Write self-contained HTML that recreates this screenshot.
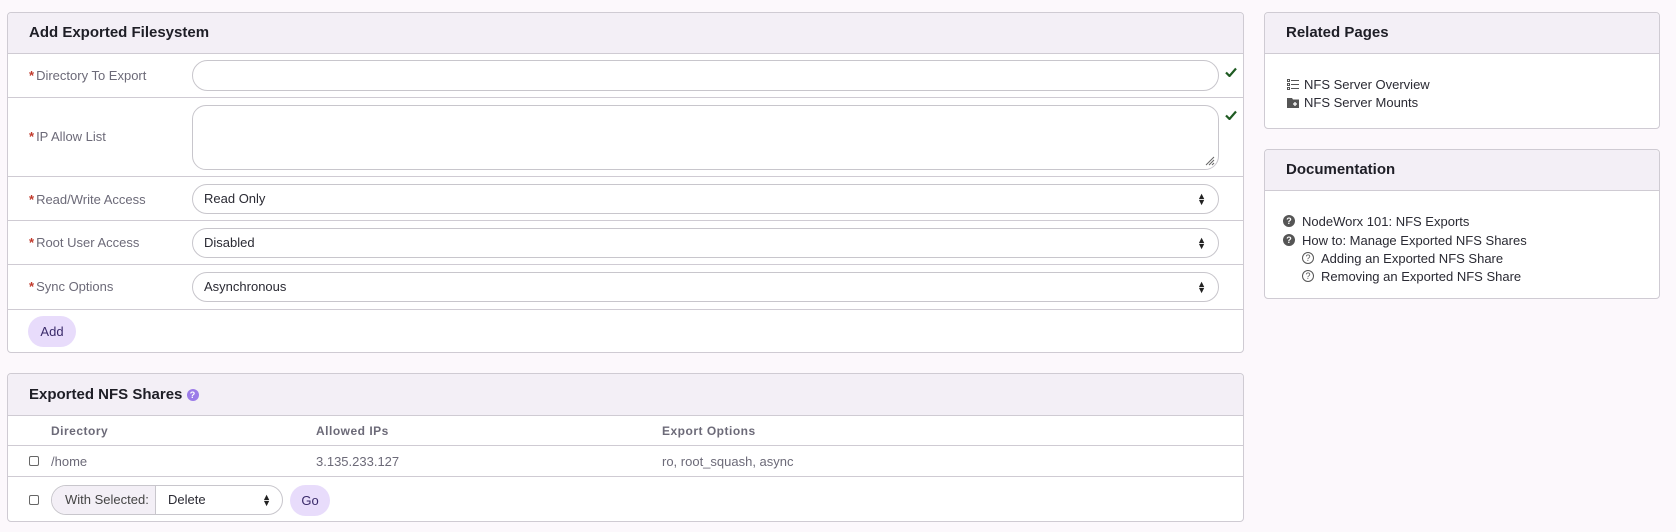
<!DOCTYPE html>
<html><head><meta charset="utf-8"><style>
*{box-sizing:border-box;margin:0;padding:0}
body{width:1676px;height:532px;background:#fcf8fc;font-family:"Liberation Sans",sans-serif;position:relative;overflow:hidden;color:#2a2a33}
.abs{position:absolute}
.panel{position:absolute;background:#fff;border:1px solid #cfcbd3;border-radius:4px}
.hd{position:absolute;left:0;right:0;top:0;background:#f3eff6;border-bottom:1px solid #cfcbd3;border-radius:4px 4px 0 0;font-size:15px;font-weight:bold;color:#1e1e26;padding-left:21px}
.row{position:absolute;left:0;right:0;border-bottom:1px solid #cfcbd3}
.lbl{position:absolute;left:21px;font-size:13px;color:#6c6a78}
.lbl b{color:#c0392b;font-weight:bold;margin-right:2px}
.inp{position:absolute;left:184px;width:1027px;border:1px solid #c8c6cc;border-radius:16px;background:#fff;font-size:13px;color:#2a2a33;padding-left:11px}
.chk{position:absolute;left:1217px}
.arr{position:absolute;right:12px;top:50%;transform:translateY(-50%);font-size:9px;line-height:6px;color:#222}
.th{position:absolute;font-size:12px;font-weight:bold;color:#6c6a78;letter-spacing:.5px}
.td{position:absolute;font-size:13px;color:#6c6a78}
.cb{position:absolute;width:10px;height:10px;border:1px solid #666;border-radius:2px;background:#fff}
.item{position:absolute;font-size:13px;color:#2a2a33;display:flex;align-items:center;gap:7px;height:16px}
.qi{display:inline-block;width:12px;height:12px;border-radius:50%;background:#555;color:#fff;font-size:9px;line-height:12px;text-align:center;font-weight:bold}
.qo{display:inline-block;width:12px;height:12px;border-radius:50%;border:1.2px solid #555;color:#555;font-size:9px;line-height:10px;text-align:center}
</style></head><body>

<div class="panel" style="left:7px;top:12px;width:1237px;height:341px">
 <div class="hd" style="height:41px;line-height:40px">Add Exported Filesystem</div>
 <div class="row" style="top:41px;height:44px">
  <div class="lbl" style="top:14px"><b>*</b>Directory To Export</div>
  <div class="inp" style="top:6px;height:31px"></div>
  <svg class="chk" style="top:13px" width="12" height="10"><path d="M1 5.5L4.5 9L11 1.5" stroke="#1f5b23" stroke-width="2.2" fill="none"/></svg>
 </div>
 <div class="row" style="top:85px;height:79px">
  <div class="lbl" style="top:31px"><b>*</b>IP Allow List</div>
  <div class="inp" style="top:7px;height:65px;border-radius:14px"><svg class="abs" style="right:3px;bottom:3px" width="10" height="10"><path d="M9 1L1 9M9 4L4 9M9 7L7 9" stroke="#666" stroke-width="1"/></svg></div>
  <svg class="chk" style="top:12px" width="12" height="10"><path d="M1 5.5L4.5 9L11 1.5" stroke="#1f5b23" stroke-width="2.2" fill="none"/></svg>
 </div>
 <div class="row" style="top:164px;height:44px">
  <div class="lbl" style="top:15px"><b>*</b>Read/Write Access</div>
  <div class="inp" style="top:7px;height:30px;line-height:28px">Read Only<div class="arr">▲<br>▼</div></div>
 </div>
 <div class="row" style="top:208px;height:44px">
  <div class="lbl" style="top:14px"><b>*</b>Root User Access</div>
  <div class="inp" style="top:7px;height:30px;line-height:28px">Disabled<div class="arr">▲<br>▼</div></div>
 </div>
 <div class="row" style="top:252px;height:45px">
  <div class="lbl" style="top:14px"><b>*</b>Sync Options</div>
  <div class="inp" style="top:7px;height:30px;line-height:28px">Asynchronous<div class="arr">▲<br>▼</div></div>
 </div>
 <div class="abs" style="left:20px;top:303px;width:48px;height:31px;border-radius:16px;background:#e8dcfb;color:#3a2a6a;font-size:13px;text-align:center;line-height:31px">Add</div>
</div>

<div class="panel" style="left:7px;top:373px;width:1237px;height:149px">
 <div class="hd" style="height:42px;line-height:41px">Exported NFS Shares <span style="display:inline-block;width:12px;height:12px;border-radius:50%;background:#9b7be8;color:#fff;font-size:9px;line-height:12px;text-align:center;vertical-align:1px">?</span></div>
 <div class="row" style="top:42px;height:30px">
  <div class="th" style="left:43px;top:8px">Directory</div>
  <div class="th" style="left:308px;top:8px">Allowed IPs</div>
  <div class="th" style="left:654px;top:8px">Export Options</div>
 </div>
 <div class="row" style="top:72px;height:31px">
  <div class="cb" style="left:21px;top:10px"></div>
  <div class="td" style="left:43px;top:8px">/home</div>
  <div class="td" style="left:308px;top:8px">3.135.233.127</div>
  <div class="td" style="left:654px;top:8px">ro, root_squash, async</div>
 </div>
 <div class="cb" style="left:21px;top:121px"></div>
 <div class="abs" style="left:43px;top:111px;width:232px;height:30px;border:1px solid #c8c6cc;border-radius:15px;overflow:hidden;font-size:13px">
  <div class="abs" style="left:0;top:0;width:104px;height:28px;background:#f3eff6;border-right:1px solid #c8c6cc;line-height:28px;padding-left:13px;color:#444">With Selected:</div>
  <div class="abs" style="left:116px;top:0;line-height:28px;color:#2a2a33">Delete</div>
  <div class="arr" style="right:11px">▲<br>▼</div>
 </div>
 <div class="abs" style="left:282px;top:111px;width:40px;height:31px;border-radius:16px;background:#e8dcfb;color:#3a2a6a;font-size:13px;text-align:center;line-height:31px">Go</div>
</div>

<div class="panel" style="left:1264px;top:12px;width:396px;height:117px">
 <div class="hd" style="height:41px;line-height:40px">Related Pages</div>
 <div class="item" style="left:22px;top:63px;gap:5px"><svg width="12" height="11"><g stroke="#555" stroke-width="1" fill="none"><rect x="0.5" y="0.5" width="2" height="2"/><rect x="0.5" y="4.5" width="2" height="2"/><rect x="0.5" y="8.5" width="2" height="2"/><path d="M4 1.5H12M4 5.5H12M4 9.5H12"/></g></svg>NFS Server Overview</div>
 <div class="item" style="left:22px;top:81px;gap:5px"><svg width="12" height="11"><path d="M0 1H5L6 2.5H12V11H0Z" fill="#555"/><path d="M8 5V9M6 7H10" stroke="#fff" stroke-width="1.3"/></svg>NFS Server Mounts</div>
</div>

<div class="panel" style="left:1264px;top:149px;width:396px;height:150px">
 <div class="hd" style="height:41px;line-height:40px">Documentation</div>
 <div class="item" style="left:18px;top:63px"><span class="qi">?</span>NodeWorx 101: NFS Exports</div>
 <div class="item" style="left:18px;top:82px"><span class="qi">?</span>How to: Manage Exported NFS Shares</div>
 <div class="item" style="left:37px;top:100px"><span class="qo">?</span>Adding an Exported NFS Share</div>
 <div class="item" style="left:37px;top:118px"><span class="qo">?</span>Removing an Exported NFS Share</div>
</div>
</body></html>
